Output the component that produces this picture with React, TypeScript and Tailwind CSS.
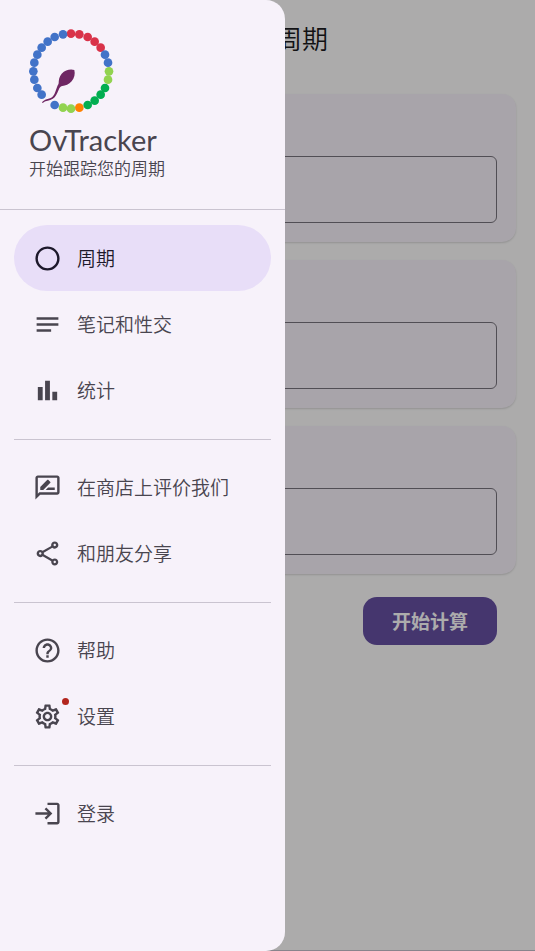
import type { IconType } from "react-icons";
import {
  MdBarChart,
  MdHelpOutline,
  MdLogin,
  MdNotes,
  MdOutlineCircle,
  MdOutlineRateReview,
  MdOutlineSettings,
  MdOutlineShare,
} from "react-icons/md";

interface NavItem {
  label: string;
  icon: IconType;
  active?: boolean;
  badge?: boolean;
}

const groups: NavItem[][] = [
  [
    { label: "周期", icon: MdOutlineCircle, active: true },
    { label: "笔记和性交", icon: MdNotes },
    { label: "统计", icon: MdBarChart },
  ],
  [
    { label: "在商店上评价我们", icon: MdOutlineRateReview },
    { label: "和朋友分享", icon: MdOutlineShare },
  ],
  [
    { label: "帮助", icon: MdHelpOutline },
    { label: "设置", icon: MdOutlineSettings, badge: true },
  ],
  [{ label: "登录", icon: MdLogin }],
];

const RED = "#d93349";
const BLUE = "#4273c8";
const LIME = "#92d350";
const GREEN = "#02ae50";
const ORANGE = "#ff8000";

// one bead per cycle day, clockwise from the top
const beads: [number, number, string][] = [
  [153, 41, RED],
  [178, 43, RED],
  [203, 51, RED],
  [224, 65, RED],
  [242, 83, RED],
  [255, 104, BLUE],
  [264, 128, BLUE],
  [267, 154, LIME],
  [264, 179, LIME],
  [255, 204, GREEN],
  [242, 224, GREEN],
  [224, 242, GREEN],
  [203, 255, GREEN],
  [178, 263, ORANGE],
  [153, 266, LIME],
  [129, 263, LIME],
  [104, 255, BLUE],
  [65, 224, BLUE],
  [52, 204, BLUE],
  [43, 179, BLUE],
  [40, 154, BLUE],
  [43, 128, BLUE],
  [52, 104, BLUE],
  [65, 83, BLUE],
  [83, 65, BLUE],
  [104, 51, BLUE],
  [129, 43, BLUE],
];

const fields = ["field-1", "field-2", "field-3"];

function Logo() {
  return (
    <svg viewBox="27 27 255 255" className="size-[85px]" aria-hidden="true">
      {beads.map(([x, y, color]) => (
        <circle key={`${x}-${y}`} cx={x} cy={y} r="13" fill={color} />
      ))}
      <path
        d="M163 150C166 162 163 175 155 184C147 193 136 198 127 198C123 199 120 201 118 205C114 213 111 224 104 232C97 240 88 241 80 243C75 244 71 247 68 249L66 247C70 243 74 240 80 238C87 236 94 235 99 229C106 220 108 209 112 199C114 195 115 193 116 190C116 180 118 169 125 161C136 150 151 146 163 150Z"
        fill="#6f2763"
      />
    </svg>
  );
}

function NavLink({ label, icon: Icon, active, badge }: NavItem) {
  return (
    <a
      href="#"
      aria-current={active ? "page" : undefined}
      className={`flex h-[66px] items-center gap-[15px] rounded-full px-[19px] text-[19px] leading-6 font-[350] ${
        active ? "bg-[#e8def8] text-[#1d192b]" : "text-[#49454f]"
      }`}
    >
      <span className="relative">
        <Icon className="size-[29px]" />
        {badge && (
          <span className="absolute -top-1 -right-[7px] size-[7px] rounded-full bg-[#b3261e]" />
        )}
      </span>
      {label}
    </a>
  );
}

function Drawer() {
  return (
    <aside className="fixed inset-y-0 left-0 w-[285px] max-w-[80%] overflow-y-auto rounded-r-[19px] bg-[#f7f2fa]">
      <header className="border-b border-[#cac4d0] px-[29px] pt-[29px] pb-[29px] text-[#49454f]">
        <Logo />
        <h1 className="mt-[10px] font-['Lato','Noto_Sans_CJK_SC',sans-serif] text-[29px] leading-8">
          OvTracker
        </h1>
        <p className="text-[17px] leading-6 font-[350]">开始跟踪您的周期</p>
      </header>
      <nav className="px-[14px] py-[15px]">
        {groups.map((items, i) => (
          <div key={i}>
            {i > 0 && <hr className="mt-4 mb-[14px] border-[#cac4d0]" />}
            {items.map((item) => (
              <NavLink key={item.label} {...item} />
            ))}
          </div>
        ))}
      </nav>
    </aside>
  );
}

export default function App() {
  return (
    <div className="min-h-screen border-b border-[#cac4d0] bg-[#fffefe] font-['Noto_Sans_CJK_SC',sans-serif]">
      <header className="flex h-[75px] items-center pl-[276px]">
        <h2 className="text-[26px] leading-8 font-[350] text-[#1c1b1f]">
          周期
        </h2>
      </header>
      <main className="flex flex-col gap-[18px] px-[19px] pt-[19px]">
        {fields.map((id) => (
          <section
            key={id}
            className="rounded-[14px] bg-[#faf4fd] px-[19px] pt-[62px] pb-[19px] shadow-[0_1px_2px_rgba(0,0,0,0.15)]"
          >
            <input
              id={id}
              aria-label="周期"
              className="block h-[67px] w-full rounded-md border border-[#79747e] bg-transparent px-4"
            />
          </section>
        ))}
        <button className="mt-[5px] mr-[19px] h-12 self-end rounded-[14px] bg-[#6750a4] px-[29px] text-[19px] leading-6 font-bold text-white">
          开始计算
        </button>
      </main>
      <div className="fixed inset-0 bg-black/[0.325]" />
      <Drawer />
    </div>
  );
}
